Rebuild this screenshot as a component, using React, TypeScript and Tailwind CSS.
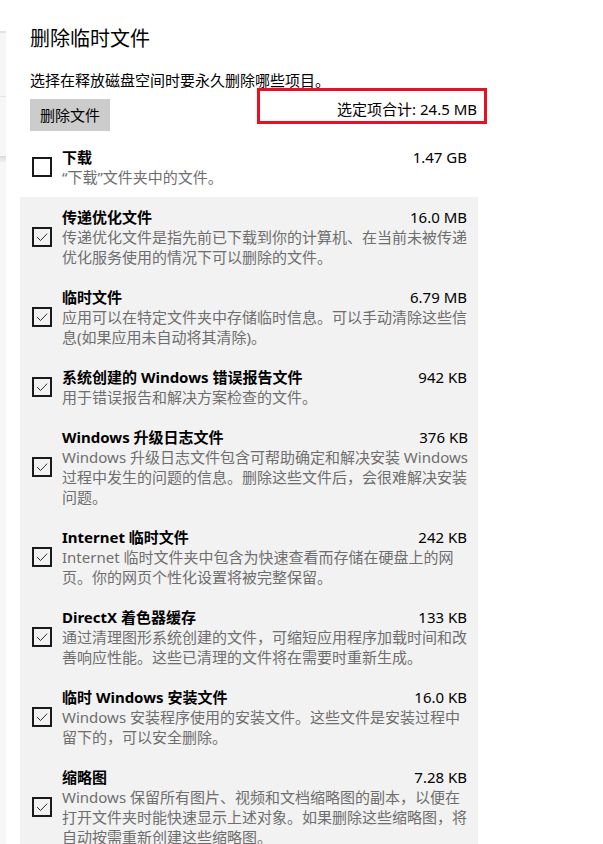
import React from "react";

type Item = {
  title: string;
  size: string;
  lines: string[];
  checked: boolean;
};

const items: Item[] = [
  { title: "下载", size: "1.47 GB", lines: ["\u201c下载\u201d文件夹中的文件。"], checked: false },
  {
    title: "传递优化文件",
    size: "16.0 MB",
    lines: ["传递优化文件是指先前已下载到你的计算机、在当前未被传递", "优化服务使用的情况下可以删除的文件。"],
    checked: true,
  },
  {
    title: "临时文件",
    size: "6.79 MB",
    lines: ["应用可以在特定文件夹中存储临时信息。可以手动清除这些信", "息(如果应用未自动将其清除)。"],
    checked: true,
  },
  {
    title: "系统创建的 Windows 错误报告文件",
    size: "942 KB",
    lines: ["用于错误报告和解决方案检查的文件。"],
    checked: true,
  },
  {
    title: "Windows 升级日志文件",
    size: "376 KB",
    lines: [
      "Windows 升级日志文件包含可帮助确定和解决安装 Windows",
      "过程中发生的问题的信息。删除这些文件后，会很难解决安装",
      "问题。",
    ],
    checked: true,
  },
  {
    title: "Internet 临时文件",
    size: "242 KB",
    lines: ["Internet 临时文件夹中包含为快速查看而存储在硬盘上的网", "页。你的网页个性化设置将被完整保留。"],
    checked: true,
  },
  {
    title: "DirectX 着色器缓存",
    size: "133 KB",
    lines: ["通过清理图形系统创建的文件，可缩短应用程序加载时间和改", "善响应性能。这些已清理的文件将在需要时重新生成。"],
    checked: true,
  },
  {
    title: "临时 Windows 安装文件",
    size: "16.0 KB",
    lines: ["Windows 安装程序使用的安装文件。这些文件是安装过程中", "留下的，可以安全删除。"],
    checked: true,
  },
  {
    title: "缩略图",
    size: "7.28 KB",
    lines: [
      "Windows 保留所有图片、视频和文档缩略图的副本，以便在",
      "打开文件夹时能快速显示上述对象。如果删除这些缩略图，将",
      "自动按需重新创建这些缩略图。",
    ],
    checked: true,
  },
];

function Checkbox({ checked }: { checked: boolean }) {
  return (
    <div className={"w-[20px] h-[20px] shrink-0 border-2 border-[#1a1a1a] flex items-center justify-center " + (checked ? "" : "bg-white")}>
      {checked && (
        <svg width="16" height="16" viewBox="0 0 16 16" fill="none">
          <path d="M3.5 8.5 L6.5 11.5 L12.8 5" stroke="#2b2b2b" strokeWidth="1" strokeLinecap="square" />
        </svg>
      )}
    </div>
  );
}

function Row({ item }: { item: Item }) {
  return (
    <div className="flex items-center py-[10px] pl-[12px] pr-[11px]">
      <Checkbox checked={item.checked} />
      <div className="ml-[10px] flex-1 flex flex-col">
        <div className="flex justify-between h-[20px] leading-[20px]">
          <span className="font-bold text-[15px] text-black whitespace-nowrap">{item.title}</span>
          <span className="text-[15px] text-black whitespace-nowrap">{item.size}</span>
        </div>
        {item.lines.map((l, i) => (
          <div key={i} className="h-[20px] leading-[20px] text-[15px] text-[#6e6e6e] whitespace-nowrap">
            {l}
          </div>
        ))}
      </div>
    </div>
  );
}

export default function App() {
  return (
    <div
      className="relative flex w-[603px] h-[844px] overflow-hidden bg-white"
      style={{ fontFamily: '"Noto Sans", "Noto Sans CJK SC", sans-serif' }}
    >
      <div className="w-[6px] shrink-0 flex flex-col">
        <div className="h-[31px] bg-white" />
        <div className="h-[2px] bg-[#e2e2e2]" />
        <div className="h-[63px] bg-[#f6f6f6]" />
        <div className="h-[1px] bg-[#e6e6e6]" />
        <div className="h-[59px] bg-[#f7f7f7]" />
        <div className="h-[6px] bg-gradient-to-b from-[#dcdcdc] to-[#f0f0f0]" />
        <div className="flex-1 bg-[#f7f7f7]" />
      </div>

      <div className="flex-1 flex flex-col pl-[14px]">
        <div className="pl-[10px] pt-[25px]">
          <h1 className="text-[20px] leading-[28px] font-normal text-black">删除临时文件</h1>
          <p className="mt-[17px] text-[15px] leading-[20px] text-black">选择在释放磁盘空间时要永久删除哪些项目。</p>
        </div>
        <div className="flex justify-between items-start mt-[9px] w-[458px]">
          <button className="ml-[10px] h-[32px] px-[10px] bg-[#cccccc] text-[15px] text-black leading-[32px]">删除文件</button>
          <span className="mt-[0px] mr-[1px] text-[15px] leading-[20px] text-black">选定项合计: 24.5 MB</span>
        </div>
        <div className="mt-[6px] w-[458px] flex flex-col">
          <Row item={items[0]} />
          <div className="bg-[#f2f2f2] flex flex-col">
            {items.slice(1).map((it) => (
              <Row key={it.title} item={it} />
            ))}
          </div>
        </div>
      </div>

      <div className="absolute left-[257px] top-[88px] w-[230px] h-[36px] border-[3px] border-[#e81123]" />
    </div>
  );
}
